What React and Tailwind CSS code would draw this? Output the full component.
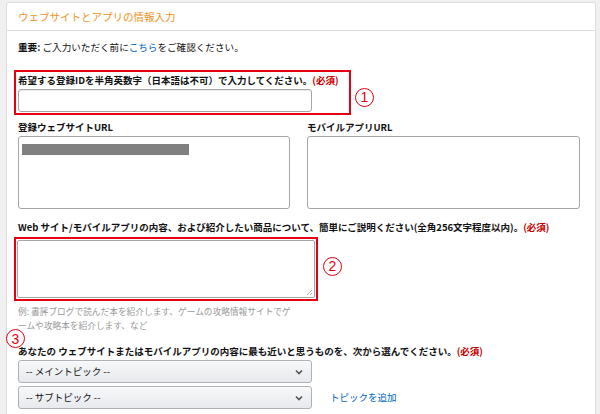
import React from "react";

const font = { fontFamily: '"Noto Sans CJK JP", "Noto Sans", sans-serif' };

function Chevron() {
  return (
    <svg width="10" height="10" viewBox="0 0 10 10" className="shrink-0">
      <path d="M2 3.5 L5 6.5 L8 3.5" fill="none" stroke="#555" strokeWidth="1.6" />
    </svg>
  );
}

function Circle({ n }) {
  return (
    <div className="w-[19px] h-[19px] rounded-full border border-[#e60012] flex items-center justify-center text-[#e60012] text-[14px] leading-none font-[Liberation_Sans,sans-serif]">
      {n}
    </div>
  );
}

function Select({ label }) {
  return (
    <div className="w-[294px] h-[23px] rounded-[3px] border border-[#adb1b8] bg-gradient-to-b from-[#f7f8fa] to-[#e7e9ec] flex items-center justify-between pl-[7px] pr-[7px] text-[9.5px] text-[#111] shadow-[0_1px_0_rgba(255,255,255,0.6)_inset]">
      <span>{label}</span>
      <Chevron />
    </div>
  );
}

export default function App() {
  return (
    <div style={font} className="w-[600px] h-[414px] overflow-hidden bg-[#f0f0f0] pt-[2px] pl-[6px] pr-[4px]">
      <div className="bg-white border border-[#dddddd] rounded-[3px] h-[420px]">
        <div className="h-[28px] flex items-center pl-[11px] border-b border-[#dddddd] text-[10.5px] text-[#f0921e]">
          ウェブサイトとアプリの情報入力
        </div>
        <div className="relative pl-[11px] pr-[15px] pt-[9px]">
          <div className="text-[9.6px] leading-[15px] text-[#111] whitespace-nowrap">
            <span className="font-bold">重要:</span> ご入力いただく前に<span className="text-[#0066c0]">こちら</span>をご確認ください。
          </div>

          <div className="flex items-center mt-[15px]">
            <div className="ml-[-4px] w-[337px] h-[45px] border-2 border-[#e60012] pl-[2px] pt-[1px]">
              <div className="text-[9.5px] leading-[14px] font-bold text-[#111] whitespace-nowrap">
                希望する登録IDを半角英数字（日本語は不可）で入力してください。<span className="text-[#c40000]">(必須)</span>
              </div>
              <div className="mt-[2px] w-[294px] h-[23px] border border-[#a6a6a6] rounded-[3px] shadow-[0_1px_0_rgba(0,0,0,0.07)_inset]" />
            </div>
            <div className="ml-[4px] mt-[9px]">
              <Circle n="1" />
            </div>
          </div>

          <div className="grid grid-cols-[272px_273px] gap-x-[17px] mt-[5px]">
            <div className="text-[9.5px] leading-[14px] font-bold text-[#111]">登録ウェブサイトURL</div>
            <div className="text-[9.5px] leading-[14px] font-bold text-[#111]">モバイルアプリURL</div>
            <div className="mt-[2px] h-[73px] border border-[#a6a6a6] rounded-[3px] pt-[7px] pl-[3px]">
              <div className="w-[167px] h-[11px] bg-[#808080]" />
            </div>
            <div className="mt-[2px] h-[73px] border border-[#a6a6a6] rounded-[3px]" />
          </div>

          <div className="mt-[11px] text-[9.5px] leading-[14px] font-bold text-[#111] whitespace-nowrap">
            Web サイト/モバイルアプリの内容、および紹介したい商品について、簡単にご説明ください(全角256文字程度以内)。<span className="text-[#c40000]">(必須)</span>
          </div>
          <div className="flex items-center mt-[3px]">
            <div className="ml-[-4px] w-[304px] h-[64px] border-2 border-[#e60012] p-[1px]">
              <div className="relative w-full h-full border border-[#a6a6a6] rounded-[2px]">
                <svg className="absolute right-[1px] bottom-[1px]" width="7" height="7" viewBox="0 0 7 7">
                  <path d="M6 1 L1 6 M6 4 L4 6" stroke="#999" strokeWidth="0.8" />
                </svg>
              </div>
            </div>
            <div className="ml-[5px] mt-[-6px]">
              <Circle n="2" />
            </div>
          </div>

          <div className="mt-[4px] w-[276px] text-[8.7px] leading-[14px] text-[#999] [line-break:loose]">
            例: 書評ブログで読んだ本を紹介します、ゲームの攻略情報サイトでゲームや攻略本を紹介します、など
          </div>

          <div className="absolute left-[-1px] top-[298px]">
            <Circle n="3" />
          </div>

          <div className="mt-[11px] text-[9.5px] leading-[14px] font-bold text-[#111] whitespace-nowrap">
            あなたの ウェブサイトまたはモバイルアプリの内容に最も近いと思うものを、次から選んでください。<span className="text-[#c40000]">(必須)</span>
          </div>
          <div className="mt-[2px]">
            <Select label="-- メイントピック --" />
          </div>
          <div className="mt-[3px] flex items-center">
            <Select label="-- サブトピック --" />
            <span className="ml-[18px] text-[9.5px] text-[#0066c0]">トピックを追加</span>
          </div>
        </div>
      </div>
    </div>
  );
}
